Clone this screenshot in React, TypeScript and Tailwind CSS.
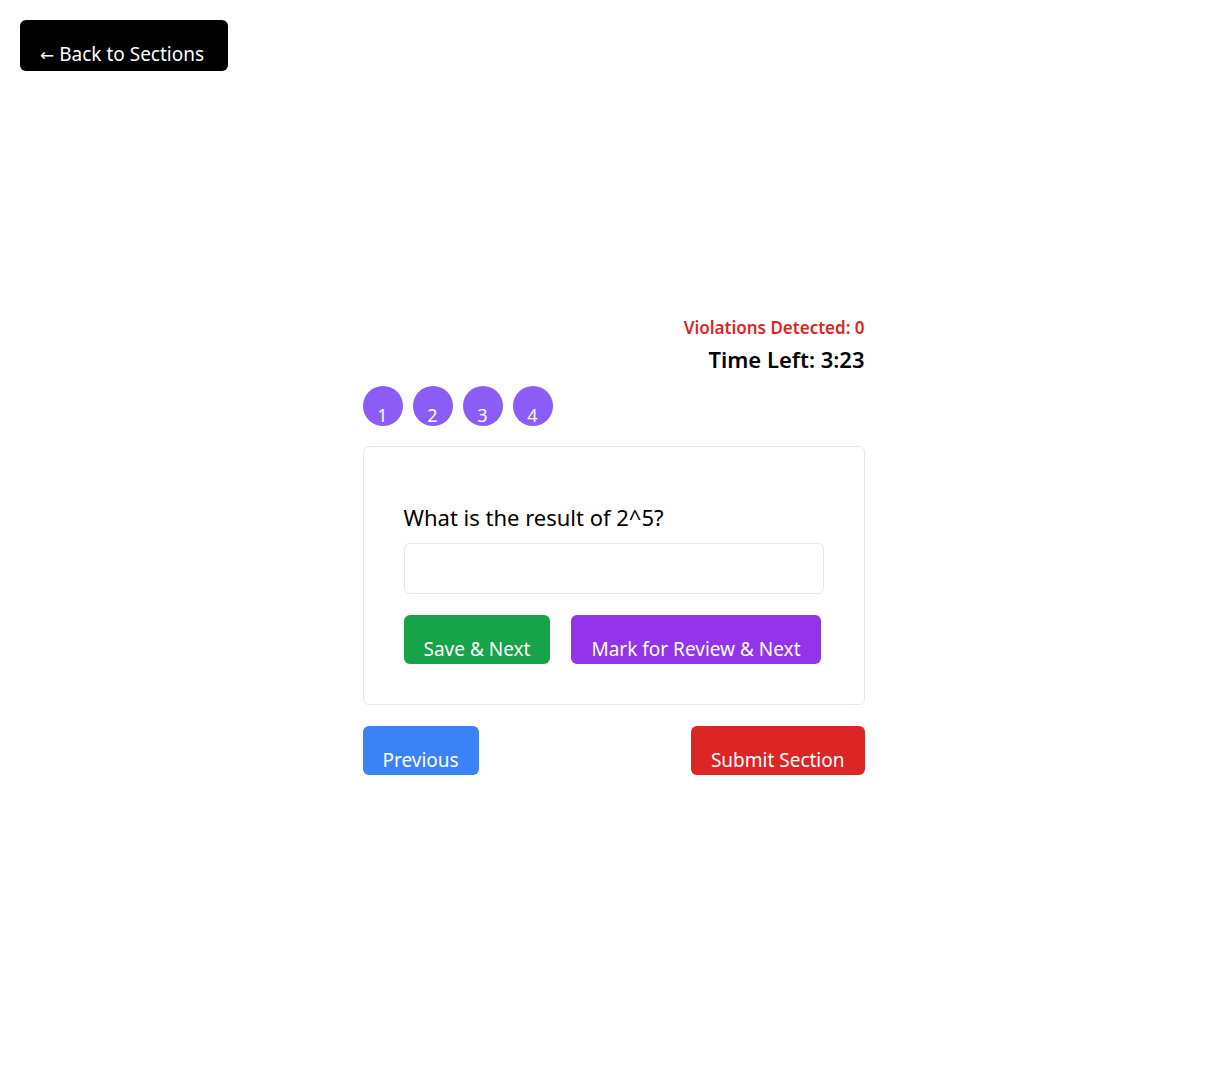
export default function App() {
  const font = { fontFamily: '"Noto Sans", "Open Sans", sans-serif' };
  return (
    <div className="min-h-[1080px] bg-white text-black" style={font}>
      <div className="pt-5 pl-5">
        <button className="h-[51px] w-[208px] rounded-md bg-black pt-[18px] pl-5 text-left text-[19px] leading-[26px] text-white">
          <span className="font-['DejaVu_Sans',sans-serif] text-[17px]">←</span> Back to Sections
        </button>
      </div>

      <div className="mx-auto mt-[246px] w-[502px]">
        <div className="flex flex-col items-end">
          <p className="text-[17px] font-semibold leading-[22px] text-[#dc2626]">Violations Detected: 0</p>
          <p className="mt-[7px] text-[22px] font-semibold leading-[26px]">Time Left: 3:23</p>
        </div>

        <div className="mt-[14px] flex gap-[10px]">
          {[1, 2, 3, 4].map((n) => (
            <button
              key={n}
              className="h-10 w-10 rounded-full bg-[#8b5cf6] pt-[17px] text-[18px] leading-[24px] text-white"
            >
              {n}
            </button>
          ))}
        </div>

        <div className="mt-5 rounded-md border border-gray-200 px-10 pt-[56px] pb-10">
          <p className="text-[22px] leading-[28px]">What is the result of 2^5?</p>
          <input className="mt-[12px] block h-[51px] w-full rounded-md border border-gray-200 px-3 outline-none" />
          <div className="mt-[21px] flex gap-[21px]">
            <button className="h-[49px] rounded-md bg-[#16a34a] px-5 pt-[18px] text-[19px] leading-[26px] text-white">
              Save &amp; Next
            </button>
            <button className="h-[49px] rounded-md bg-[#9333ea] px-5 pt-[18px] text-[19px] leading-[26px] text-white">
              Mark for Review &amp; Next
            </button>
          </div>
        </div>

        <div className="mt-[21px] flex justify-between">
          <button className="h-[49px] rounded-md bg-[#3b82f6] px-5 pt-[18px] text-[19px] leading-[26px] text-white">
            Previous
          </button>
          <button className="h-[49px] rounded-md bg-[#dc2626] px-5 pt-[18px] text-[19px] leading-[26px] text-white">
            Submit Section
          </button>
        </div>
      </div>
    </div>
  );
}
